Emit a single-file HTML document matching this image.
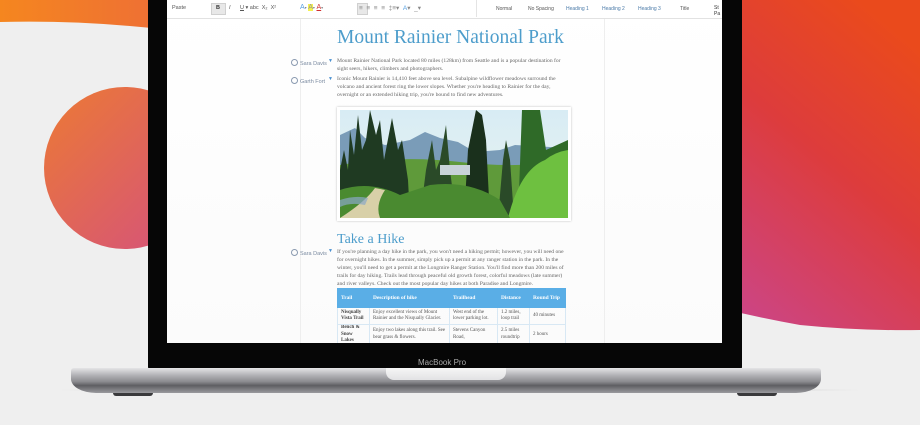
<!DOCTYPE html>
<html><head><style>
*{margin:0;padding:0;box-sizing:border-box}
body{width:920px;height:425px;overflow:hidden;background:#efefef;position:relative;font-family:"Liberation Serif",serif}
.abs{position:absolute}
.t{position:absolute;font-size:5.6px;color:#666;line-height:8px;white-space:nowrap}
.tb{position:absolute;font-family:"Liberation Sans",sans-serif;font-size:5.5px;color:#555;white-space:nowrap}
.cm{position:absolute;font-family:"Liberation Sans",sans-serif;font-size:5.5px;color:#7a8aa0;white-space:nowrap}
.cm:before{content:"";display:inline-block;width:5px;height:5px;border:1px solid #8a9ab0;border-radius:50%;margin-right:2px;vertical-align:-1px}
table{border-collapse:collapse;font-size:5px;color:#555;line-height:6.5px;table-layout:fixed}
td{border:1px solid #d8e8f4;padding:0 3px;vertical-align:middle;overflow:hidden}
th{background:#5aaee6;color:#fff;font-weight:bold;text-align:left;padding:0 3px;height:19px;border:1px solid #5aaee6;font-size:5.4px;line-height:7px}
</style></head><body>
<svg class="abs" style="left:0;top:0" width="920" height="425">
<defs>
<linearGradient id="o" x1="0" x2="1"><stop offset="0" stop-color="#f5861f"/><stop offset="1" stop-color="#ee6f35"/></linearGradient>
<linearGradient id="r" x1="0.7" y1="0" x2="0.2" y2="1"><stop offset="0" stop-color="#ea4a1c"/><stop offset="0.45" stop-color="#dd3c3c"/><stop offset="1" stop-color="#cc4584"/></linearGradient>
<linearGradient id="c" x1="0" y1="0" x2="1" y2="1"><stop offset="0" stop-color="#ec7a34"/><stop offset="0.9" stop-color="#d65478"/></linearGradient>
</defs>
<path d="M0 0 L160 0 L160 29 Q80 20 0 22Z" fill="url(#o)"/>
<circle cx="125" cy="168" r="81" fill="url(#c)"/>
<path d="M720 0 L920 0 L920 330 Q860 331 800 325 Q760 318 720 308Z" fill="url(#r)"/>
</svg>
<!-- laptop bezel -->
<div class="abs" style="left:148px;top:0;width:594px;height:370px;background:#060606;border-radius:0 0 3px 3px"></div>
<div class="abs" style="left:167px;top:0;width:555px;height:343px;background:linear-gradient(#fff,#fbfbfb)"></div>
<!-- toolbar -->
<div class="abs" style="left:167px;top:18px;width:555px;height:1px;background:#e2e2e2"></div>
<div class="tb" style="left:172px;top:5px">Paste</div>
<div class="abs" style="left:211px;top:3px;width:15px;height:12px;background:#e8e8e8;border:1px solid #d0d0d0"></div>
<div class="tb" style="left:216px;top:5px;font-weight:bold;color:#333">B</div>
<div class="tb" style="left:229px;top:5px;font-style:italic">I</div>
<div class="tb" style="left:240px;top:5px"><u>U</u> ▾ abc &nbsp;X₂ &nbsp;X²</div>
<div class="tb" style="left:300px;top:4px;font-size:7px;color:#58a0e0">A<span style="color:#888;font-size:4px">▾</span> <span style="background:#f4f050;color:#999">A</span><span style="color:#888;font-size:4px">▾</span> <span style="color:#d03030;text-decoration:underline">A</span><span style="color:#888;font-size:4px">▾</span></div>
<div class="abs" style="left:357px;top:3px;width:11px;height:12px;background:#e8e8e8;border:1px solid #d0d0d0"></div>
<div class="tb" style="left:359px;top:4px;color:#888;font-size:6.5px">≡ &nbsp;≡ &nbsp;≡ &nbsp;≡ &nbsp;‡≡▾ &nbsp;<span style="color:#58a0e0">A</span>▾ &nbsp;_▾</div>
<div class="abs" style="left:476px;top:0;width:1px;height:17px;background:#e4e4e4"></div>
<div class="tb" style="left:496px;top:6px;font-size:5px">Normal</div>
<div class="tb" style="left:528px;top:6px;font-size:5px">No Spacing</div>
<div class="tb" style="left:566px;top:6px;font-size:5px;color:#4a7aa8">Heading 1</div>
<div class="tb" style="left:602px;top:6px;font-size:5px;color:#4a7aa8">Heading 2</div>
<div class="tb" style="left:638px;top:6px;font-size:5px;color:#4a7aa8">Heading 3</div>
<div class="tb" style="left:680px;top:6px;font-size:5px">Title</div>
<div class="tb" style="left:714px;top:5px;font-size:5px;color:#333">St<br>Pa</div>
<!-- page borders -->
<div class="abs" style="left:300px;top:19px;width:1px;height:324px;background:#eee"></div>
<div class="abs" style="left:604px;top:19px;width:1px;height:324px;background:#eee"></div>
<!-- title -->
<div class="abs" style="left:337px;top:27px;font-size:19.5px;color:#4d9dcb;white-space:nowrap">Mount Rainier National Park</div>
<div class="cm" style="left:291px;top:59px">Sara Davis</div>
<div class="cm" style="left:291px;top:77px">Garth Fort</div>
<div class="cm" style="left:291px;top:249px">Sara Davis</div>
<div class="abs" style="left:328px;top:59px;font-size:5px;color:#4a90d0">▼</div>
<div class="abs" style="left:328px;top:77px;font-size:5px;color:#4a90d0">▼</div>
<div class="abs" style="left:328px;top:249px;font-size:5px;color:#4a90d0">▼</div>
<div class="t" style="left:337px;top:57px">Mount Rainier National Park located 80 miles (128km) from Seattle and is a popular destination for<br>sight seers, hikers, climbers and photographers.</div>
<div class="t" style="left:337px;top:75px">Iconic Mount Rainier is 14,410 feet above sea level. Subalpine wildflower meadows surround the<br>volcano and ancient forest ring the lower slopes. Whether you're heading to Rainier for the day,<br>overnight or an extended hiking trip, you're bound to find new adventures.</div>
<!-- photo -->
<div class="abs" style="left:337px;top:107px;width:234px;height:114px;background:#fff;box-shadow:0 0 2px #bbb"></div>
<svg class="abs" style="left:340px;top:110px" width="228" height="108" viewBox="0 0 228 108">
<defs><linearGradient id="sk" x1="0" y1="0" x2="0" y2="1"><stop offset="0" stop-color="#d8ecf4"/><stop offset="1" stop-color="#eaf4f0"/></linearGradient></defs>
<rect width="228" height="108" fill="url(#sk)"/>
<path d="M0 25 L15 18 L25 28 L45 35 L70 30 L85 22 L100 28 L118 32 L135 42 L160 40 L175 35 L228 38 L228 70 L0 70Z" fill="#7a9cb8"/>
<path d="M0 55 Q60 45 120 52 T228 50 L228 108 L0 108Z" fill="#5f9a3a"/>
<path d="M0 108 L0 60 L4 40 L8 60 L10 20 L14 45 L18 5 L22 40 L26 30 L30 0 L36 25 L40 10 L44 50 L52 8 L58 40 L62 30 L68 70 L70 108Z" fill="#1f3a22"/>
<path d="M80 108 L86 60 L92 30 L96 60 L100 50 L106 15 L110 60 L116 108Z" fill="#2a4a28"/>
<path d="M124 108 L128 40 L132 20 L136 0 L142 5 L146 30 L150 108Z" fill="#1a301c"/>
<path d="M158 108 L163 50 L166 30 L170 50 L174 108Z" fill="#2a4a28"/>
<path d="M178 108 L182 0 L200 0 L206 40 L228 30 L228 108Z" fill="#2f6a28"/>
<path d="M168 108 Q180 60 205 50 Q215 42 228 40 L228 108Z" fill="#6ec040"/>
<path d="M0 108 L0 80 Q30 70 60 85 L90 75 Q130 70 160 90 L170 108Z" fill="#4a8a30"/>
<path d="M0 108 Q25 92 35 78 L45 80 Q35 95 40 108Z" fill="#d8d0a8"/>
<path d="M0 90 Q15 85 28 88 L25 95 Q10 92 0 97Z" fill="#8aa8c8" opacity=".7"/>
<rect x="100" y="55" width="30" height="10" fill="#c8d2d8"/>
</svg>
<!-- take a hike -->
<div class="abs" style="left:337px;top:232px;font-size:14px;color:#4d9dcb;white-space:nowrap">Take a Hike</div>
<div class="t" style="left:337px;top:248px">If you're planning a day hike in the park, you won't need a hiking permit; however, you will need one<br>for overnight hikes. In the summer, simply pick up a permit at any ranger station in the park. In the<br>winter, you'll need to get a permit at the Longmire Ranger Station. You'll find more than 200 miles of<br>trails for day hiking. Trails lead through peaceful old growth forest, colorful meadows (late summer)<br>and river valleys. Check out the most popular day hikes at both Paradise and Longmire.</div>
<table class="abs" style="left:337px;top:288px;width:229px">
<colgroup><col style="width:32px"><col style="width:80px"><col style="width:48px"><col style="width:32px"><col></colgroup>
<tr><th>Trail</th><th>Description of hike</th><th>Trailhead</th><th>Distance</th><th>Round Trip</th></tr>
<tr style="height:17px"><td style="font-weight:bold;color:#444">Nisqually Vista Trail</td><td>Enjoy excellent views of Mount Rainier and the Nisqually Glacier.</td><td>West end of the lower parking lot.</td><td>1.2 miles, loop trail</td><td>40 minutes</td></tr>
<tr style="height:19px"><td style="font-weight:bold;color:#444">Bench &amp; Snow Lakes</td><td>Enjoy two lakes along this trail. See bear grass &amp; flowers.</td><td>Stevens Canyon Road,</td><td>2.5 miles roundtrip</td><td>2 hours</td></tr>
</table>
<div class="abs" style="left:167px;top:343px;width:555px;height:27px;background:#060606"></div>
<div class="abs" style="left:418px;top:358px;font-family:'Liberation Sans',sans-serif;font-size:8px;color:#aaa;white-space:nowrap">MacBook Pro</div>
<!-- base -->
<div class="abs" style="left:60px;top:389px;width:800px;height:2px;background:linear-gradient(90deg,transparent,#d4d4d4 20%,#d4d4d4 80%,transparent)"></div>
<div class="abs" style="left:113px;top:390px;width:40px;height:6px;border-radius:3px;background:#3a3a3c"></div>
<div class="abs" style="left:737px;top:390px;width:40px;height:6px;border-radius:3px;background:#3a3a3c"></div>
<div class="abs" style="left:71px;top:368px;width:750px;height:25px;border-radius:3px 3px 25px 25px/3px 3px 14px 14px;background:linear-gradient(#e4e4e6,#b0b0b4 30%,#8a8a8e 55%,#5e5e62 70%,#9a9a9e 100%)"></div>
<div class="abs" style="left:386px;top:368px;width:120px;height:12px;border-radius:0 0 8px 8px;background:linear-gradient(#f6f6f6,#e2e2e4)"></div>
</body></html>
